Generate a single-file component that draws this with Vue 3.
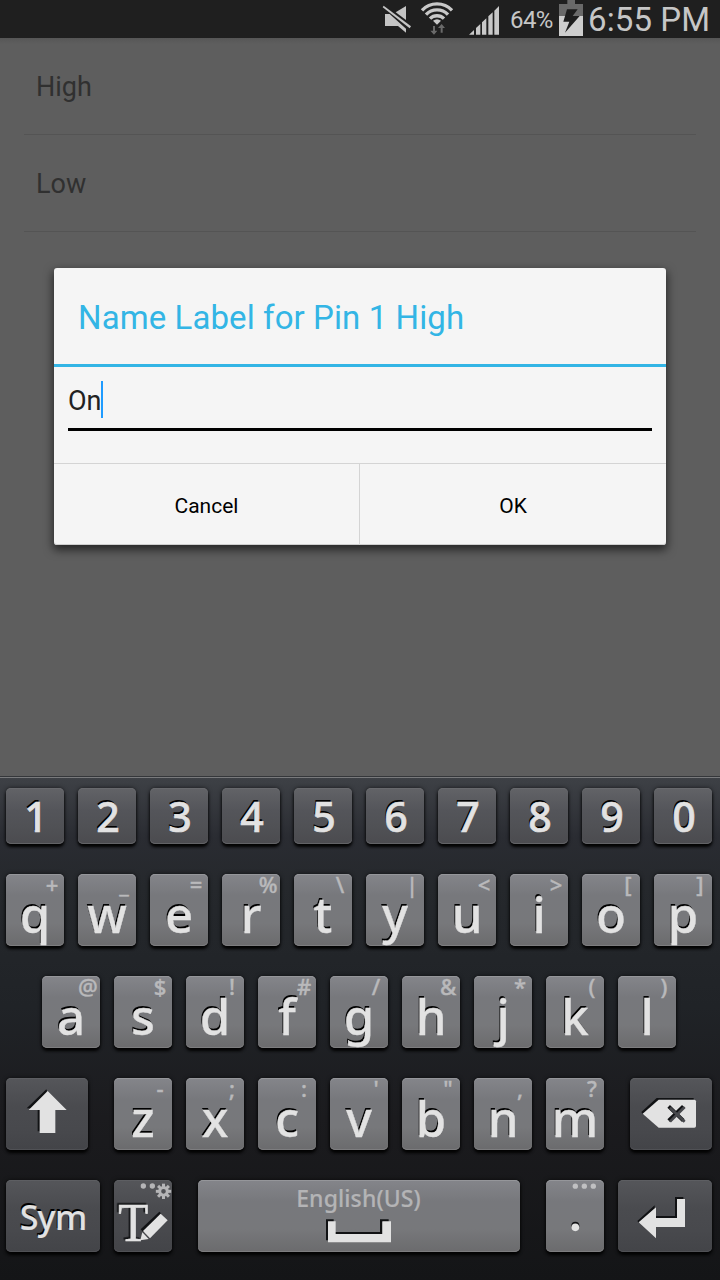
<script setup>
const numbers = ['1', '2', '3', '4', '5', '6', '7', '8', '9', '0']

const top = [
  ['q', '+'], ['w', '_'], ['e', '='], ['r', '%'], ['t', '\\'],
  ['y', '|'], ['u', '<'], ['i', '>'], ['o', '['], ['p', ']'],
]
const home = [
  ['a', '@'], ['s', '$'], ['d', '!'], ['f', '#'], ['g', '/'],
  ['h', '&'], ['j', '*'], ['k', '('], ['l', ')'],
]
const bottom = [
  ['z', '-'], ['x', ';'], ['c', ':'], ['v', "'"], ['b', '"'], ['n', ','], ['m', '?'],
]
const gearTeeth = [0, 45, 90, 135, 180, 225, 270, 315]
</script>

<template>
  <div class="screen">
    <header class="status">
      <svg class="mute" width="34" height="38" viewBox="30 0 102 114">
        <g fill="#c4c4c4">
          <path d="M45 42H59L108 86V98L84 78H45Z" />
          <path d="M108 18V60L77 37Z" />
          <path d="M41 17L123 79L119 85L38 22Z" />
        </g>
      </svg>
      <svg class="wifi" width="34" height="38" viewBox="150 0 102 114">
        <g fill="none" stroke="#c8c8c8" stroke-width="10">
          <path d="M156 31A62 62 0 0 1 246 31" />
          <path d="M168 44A45.500 45.500 0 0 1 234 44" />
          <path d="M180 56A29.500 29.500 0 0 1 222 56" />
        </g>
        <path fill="#c8c8c8" d="M189 62Q201 53 213 62L201 74Z" />
        <path fill="#6a6a6a" d="M189 78H195V92H202L192 104L181 92H189ZM212 98H218V84H225L215 72L204 84H212Z" />
      </svg>
      <svg class="signal" width="32" height="38" viewBox="294 0 96 114">
        <path fill="#c8c8c8" d="M297 104L312 90V104ZM318 84L331 72V104H318ZM336 67L349 55V104H336ZM355 49L368 37V104H355ZM373 32L387 18V104H373Z" />
      </svg>
      <span class="percent">64%</span>
      <svg class="battery" width="24" height="38" viewBox="567 0 72 114">
        <path fill="#696969" d="M592 0H615V12H639V48H567V12H592Z" />
        <path fill="#cdcdcd" d="M567 48H639V108H567Z" />
        <path fill="#1d1d1d" d="M591 28H623L608 48H629L585 98L598 65H580Z" />
      </svg>
      <span class="clock">6:55 PM</span>
    </header>

    <main class="page">
      <ul class="list">
        <li>High</li>
        <li>Low</li>
      </ul>
      <section class="dialog">
        <h1>Name Label for Pin 1 High</h1>
        <div class="body">
          <div class="field"><span>On</span><i class="caret"></i></div>
        </div>
        <div class="actions">
          <div class="action cancel">Cancel</div>
          <div class="action ok">OK</div>
        </div>
      </section>
    </main>

    <footer class="keyboard">
      <div class="row">
        <div v-for="n in numbers" :key="n" class="key num">{{ n }}</div>
      </div>
      <div class="row">
        <div v-for="[c, h] in top" :key="c" class="key letter"><span>{{ c }}</span><small>{{ h }}</small></div>
      </div>
      <div class="row inset">
        <div v-for="[c, h] in home" :key="c" class="key letter"><span>{{ c }}</span><small>{{ h }}</small></div>
      </div>
      <div class="row">
        <div class="key dark shift">
          <svg width="82" height="72" viewBox="18 354 246 216">
            <path class="shade" d="M139 388L80 445H113V514H119L141 392Z" />
            <path class="ink" d="M143 393L200 450H166V519H119V450H86Z" />
          </svg>
        </div>
        <div v-for="[c, h] in bottom" :key="c" class="key letter"><span>{{ c }}</span><small>{{ h }}</small></div>
        <div class="key dark back">
          <svg width="82" height="72" viewBox="810 354 246 216">
            <path class="shade" d="M844 456L890 414H1001V422H896L850 464Z" />
            <path class="ink" d="M848 461L896 419H1003Q1008 419 1008 424V498Q1008 503 1003 503H896Z" />
            <path d="M926 439L970 482M970 439L926 482" stroke="#111214" stroke-width="11" />
            <path d="M930 443L974 485M974 441L930 485" stroke="#47484c" stroke-width="8" />
          </svg>
        </div>
      </div>
      <div class="row">
        <div class="key dark sym">Sym</div>
        <div class="key dark edit">
          <svg width="58" height="72" viewBox="342 60 174 216">
            <text class="tee ink" x="355" y="242" textLength="90" lengthAdjust="spacingAndGlyphs">T</text>
            <path class="shade" d="M422 208L478 155L483 160L430 217Z" />
            <path class="ink" d="M482 161L503 181L450 235L429 213Z" />
            <path class="ink" d="M427 217L446 237L421 241Z" />
            <g fill="#b5b5b7">
              <circle cx="430" cy="78" r="8" />
              <circle cx="457" cy="78" r="8" />
              <rect v-for="a in gearTeeth" :key="a" x="486" y="71" width="9" height="11" :transform="`rotate(${a} 490.500 94)`" />
            </g>
            <circle cx="490.500" cy="94" r="11.500" fill="none" stroke="#b5b5b7" stroke-width="9" />
          </svg>
        </div>
        <div class="key space">
          <span>English(US)</span>
          <svg width="66" height="24" viewBox="135 176 198 72">
            <path class="shade" d="M135 177H158V215H297V177H323V185H304V221H164V240H135Z" />
            <path class="ink" d="M141 183H164V221H304V183H330V246H141Z" />
          </svg>
        </div>
        <div class="key dot">
          <svg width="58" height="72" viewBox="798 60 174 216">
            <circle class="shade" cx="886" cy="197" r="12" />
            <circle class="ink" cx="886" cy="202" r="11.500" />
            <g fill="#c0c0c2">
              <circle cx="886" cy="78.500" r="8" />
              <circle cx="913" cy="78.500" r="8" />
              <circle cx="940" cy="78.500" r="8" />
            </g>
          </svg>
        </div>
        <div class="key dark enter">
          <svg width="94" height="72" viewBox="1014 60 282 216">
            <path class="shade" d="M1072 183L1124 136V168H1185V111H1210V119H1191V174H1128V142L1077 189Z" />
            <path class="ink" d="M1076 187L1128 142V174H1191V117H1215V201H1128V235Z" />
          </svg>
        </div>
      </div>
    </footer>
  </div>
</template>

<style>
body {
  margin: 0;
  background: #5e5e5e;
}
</style>

<style scoped>
.screen {
  width: 720px;
  height: 1280px;
  display: flex;
  flex-direction: column;
  overflow: hidden;
  background: #5e5e5e;
  font-family: Roboto, "Liberation Sans", sans-serif;
}
svg {
  display: block;
  flex: none;
}
.status {
  height: 38px;
  flex: none;
  display: flex;
  background: #1f1f1f;
  color: #c6c6c6;
  white-space: nowrap;
  padding-left: 380px;
}
.wifi {
  margin-left: 6px;
}
.signal {
  margin-left: 14px;
}
.percent {
  width: 43px;
  margin-left: 10px;
  font-size: 24px;
  line-height: 40px;
  letter-spacing: -0.6px;
}
.battery {
  margin-left: 6px;
}
.clock {
  margin-left: 5px;
  font-size: 33px;
  line-height: 40px;
  letter-spacing: 0.1px;
}
.page {
  height: 738px;
  flex: none;
  background: linear-gradient(#565656, #5e5e5e 6px);
}
.list {
  list-style: none;
  margin: 0;
  padding: 0 24px;
}
.list li {
  height: 96px;
  padding-left: 12px;
  border-bottom: 1px solid #545454;
  color: #303030;
  font-size: 27px;
  line-height: 99px;
}
.dialog {
  width: 612px;
  height: 277px;
  margin: 36px auto 0;
  border-radius: 3px;
  background: #f5f5f5;
  box-shadow: 0 4px 10px 1px rgba(0, 0, 0, 0.6), inset 0 -1px #cfcfcf;
}
.dialog h1 {
  height: 96px;
  margin: 0;
  padding-left: 24px;
  border-bottom: 3px solid #33b5e5;
  color: #33b5e5;
  font-size: 33px;
  font-weight: 400;
  line-height: 99px;
  letter-spacing: 0.09px;
}
.body {
  box-sizing: border-box;
  height: 96px;
  padding: 14px 14px 0;
}
.field {
  box-sizing: border-box;
  height: 50px;
  display: flex;
  border-bottom: 3px solid #000;
  color: #222;
  font-size: 27px;
  line-height: 41px;
}
.caret {
  width: 2px;
  height: 37px;
  margin-left: -1px;
  background: #1e9bff;
}
.actions {
  box-sizing: border-box;
  height: 82px;
  display: flex;
  border-top: 1px solid #d4d4d4;
}
.action {
  text-align: center;
  color: #000;
  font-size: 21px;
  line-height: 84px;
}
.cancel {
  width: 305px;
  border-right: 1px solid #d4d4d4;
}
.ok {
  width: 306px;
}
.keyboard {
  height: 504px;
  flex: none;
  box-sizing: border-box;
  border-top: 1px solid #35373a;
  box-shadow: inset 0 1px #797a7c;
  padding: 11px 8px 28px 6px;
  display: flex;
  flex-direction: column;
  justify-content: space-between;
  background: linear-gradient(#3e4146, #2a2c32 60px, #25282c 110px, #202327 230px, #1b1b1e 340px, #141517);
  font-family: "Noto Sans", "Open Sans", sans-serif;
}
.row {
  display: flex;
  gap: 14px;
}
.inset {
  padding-left: 36px;
}
.key {
  position: relative;
  flex: none;
  box-sizing: border-box;
  width: 58px;
  height: 72px;
  border-radius: 5px;
  background: linear-gradient(#84858a, #77787c 30%, #77787b 68%, #6b6b6d);
  box-shadow: inset 0 1px #95969a, inset 0 -1px #7d7d7f, 0 3px 3px #030303, 0 0 4px rgba(0, 0, 0, 0.6);
  color: #e2e2e2;
  font-weight: 500;
  text-align: center;
}
.num {
  height: 56px;
  padding-left: 2px;
  font-size: 41px;
  line-height: 57px;
  -webkit-text-stroke: 0.7px #e2e2e2;
  text-shadow: -1px -2px #000;
}
.num,
.dark {
  background: linear-gradient(#626367, #54555a 40%, #505155 70%, #4b4b4f);
  box-shadow: inset 0 1px #68696d, inset 0 -1px #626366, 0 3px 3px #030303, 0 0 4px rgba(0, 0, 0, 0.6);
}
.dark {
  background: linear-gradient(#55565a, #4a4b4f 40%, #48494d 70%, #434448);
  box-shadow: inset 0 1px #5d5e62, inset 0 -1px #505155, 0 3px 3px #030303, 0 0 4px rgba(0, 0, 0, 0.6);
}
.letter span {
  display: block;
  font-size: 49px;
  line-height: 81px;
  -webkit-text-stroke: 0.4px #e2e2e2;
  text-shadow: -1px -2px #000;
}
.letter small {
  position: absolute;
  top: -1px;
  left: 34px;
  width: 24px;
  display: flex;
  justify-content: center;
  color: #b9b9bb;
  font-size: 22px;
  line-height: 22px;
  -webkit-text-stroke: 0.4px #b9b9bb;
}
.shift {
  width: 82px;
  margin-right: 12px;
}
.back {
  width: 82px;
  margin-left: 12px;
}
.sym {
  width: 94px;
  font-size: 34px;
  line-height: 74px;
  letter-spacing: -0.7px;
  -webkit-text-stroke: 0.2px #e2e2e2;
  text-shadow: -1px -2px #000;
}
.space {
  width: 322px;
  margin: 0 12px;
  display: flex;
  flex-direction: column;
  align-items: center;
  padding-right: 1px;
  color: #b4b4b6;
}
.space span {
  height: 39px;
  font-size: 23px;
  line-height: 37px;
  letter-spacing: 0.1px;
  -webkit-text-stroke: 0.2px #b4b4b6;
}
.enter {
  width: 94px;
}
.ink {
  fill: #e2e2e2;
}
.shade {
  fill: #111214;
}
.tee {
  font-family: "Liberation Serif", serif;
  font-size: 162px;
  font-weight: 400;
  stroke: #e2e2e2;
  stroke-width: 2px;
  filter: drop-shadow(-5px -5px 0 #111214);
}
</style>
